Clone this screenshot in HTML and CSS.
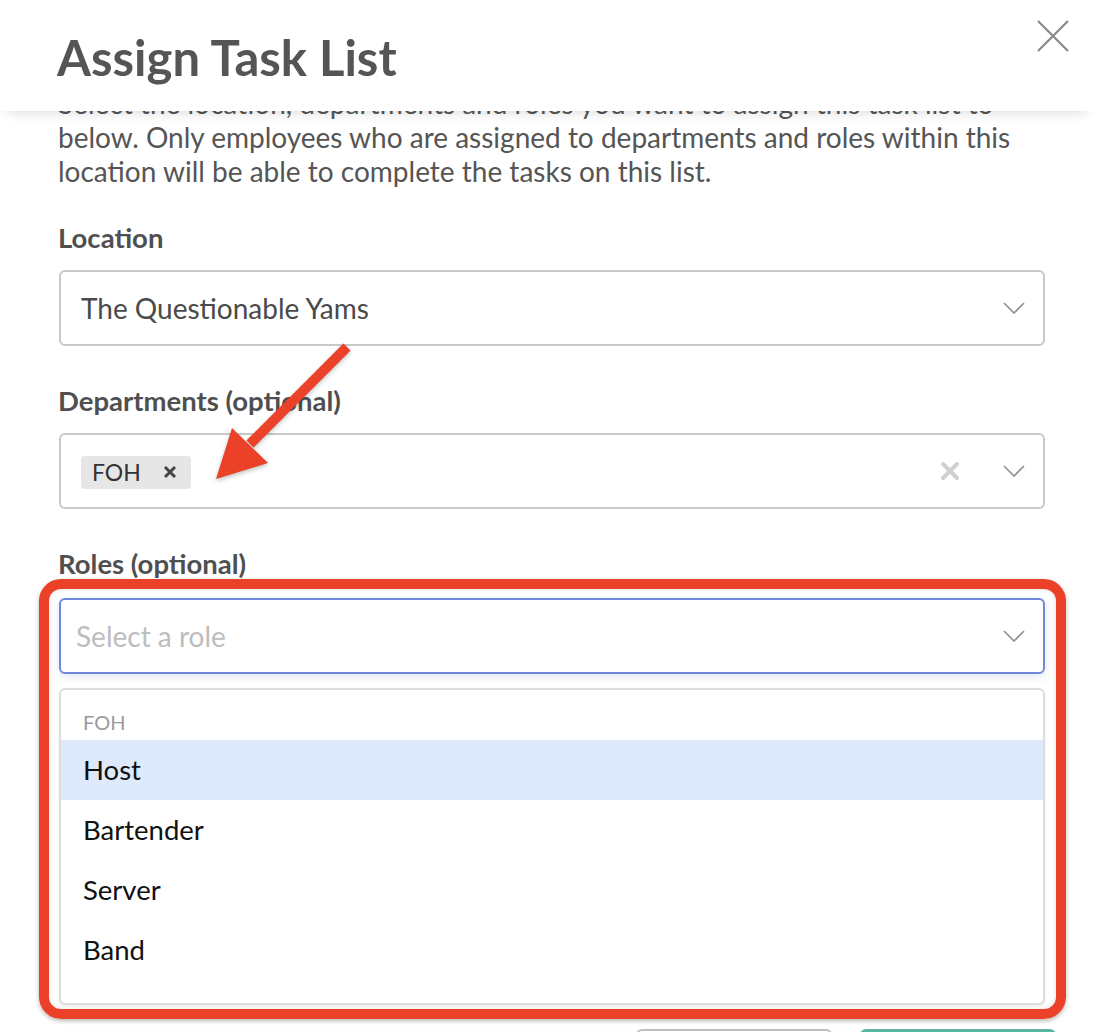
FILE: index.html
```html
<!DOCTYPE html>
<html lang="en">
<head>
<meta charset="UTF-8">
<meta name="viewport" content="width=device-width, initial-scale=1.0">
<title>Assign Task List</title>
<link rel="stylesheet" href="styles.css">
</head>
<body>
<div id="modal">
    <header class="modal-head">
        <h1>Assign Task List</h1>
        <a href="javascript:;" class="close" aria-label="Close">
            <svg width="32" height="32" viewBox="0 0 32 32"><path d="M1 1L31 31M31 1L1 31"/></svg>
        </a>
    </header>
    <div class="modal-body">
        <p class="intro">Select the location, departments and roles you want to assign this task list to below. Only employees who are assigned to departments and roles within this location will be able to complete the tasks on this list.</p>
        <div class="field">
            <label>Location</label>
            <div class="select">
                <span class="value">The Questionable Yams</span>
                <svg class="chevron" width="22" height="12" viewBox="0 0 22 12"><path d="M1 1l10 10 10-10"/></svg>
            </div>
        </div>
        <div class="field">
            <label>Departments (optional)</label>
            <div class="select">
                <span class="value">
                    <span class="chip">FOH<svg width="14" height="14" viewBox="0 0 14 14"><path d="M2 2l10 10M12 2L2 12"/></svg></span>
                </span>
                <svg class="clear" width="20" height="20" viewBox="0 0 20 20"><path d="M3 3l14 14M17 3L3 17"/></svg>
                <svg class="chevron" width="22" height="12" viewBox="0 0 22 12"><path d="M1 1l10 10 10-10"/></svg>
            </div>
        </div>
        <div class="field roles">
            <label>Roles (optional)</label>
            <div class="callout">
                <div class="select focus">
                    <span class="value placeholder">Select a role</span>
                    <svg class="chevron" width="22" height="12" viewBox="0 0 22 12"><path d="M1 1l10 10 10-10"/></svg>
                </div>
                <ul class="menu">
                    <li class="group">FOH</li>
                    <li class="active">Host</li>
                    <li>Bartender</li>
                    <li>Server</li>
                    <li>Band</li>
                </ul>
            </div>
        </div>
        <div class="actions">
            <a href="javascript:;" class="btn cancel" aria-label="Cancel"></a>
            <a href="javascript:;" class="btn save" aria-label="Save"></a>
        </div>
    </div>
    <svg class="arrow" width="150" height="155" viewBox="0 0 150 155">
        <path class="shaft" d="M142 12L45 109"/>
        <polygon points="11,144 27,93 63,128"/>
    </svg>
</div>
</body>
</html>
```

FILE: styles.css
```css
* {box-sizing: border-box;}
body {margin: 0;background: #fff;font-family: Lato, "Liberation Sans", sans-serif;color: #4a4a4a;}
ul {margin: 0;padding: 0;list-style: none;}
#modal {position: relative;width: 1093px;height: 1032px;overflow: hidden;}

.modal-head {position: relative;z-index: 2;height: 111px;padding: 27px 0 0 57px;background: #fff;box-shadow: 0 7px 12px -7px rgba(0, 0, 0, .18);}
.modal-head h1 {margin: 0;font-size: 49px;line-height: 60px;font-weight: 700;color: #555;}
.close {position: absolute;top: 20px;right: 24px;width: 32px;height: 32px;}
.close svg {display: block;}
.close path {stroke: #8a8a8a;stroke-width: 2.2;fill: none;}

.modal-body {padding: 0 48px 0 59px;}
.intro {max-width: 990px;margin: -25px 0 36px -1px;font-size: 28px;line-height: 34px;color: #555;}

.field + .field {margin-top: 41px;}
.field label {display: block;margin: 0 0 18px -1px;font-size: 27.5px;line-height: 28px;font-weight: 700;color: #4f4f4f;}
.roles label {margin-bottom: 1px;}

.select {display: flex;align-items: center;height: 76px;padding: 0 18px 0 20px;border: 2px solid #c9c9c9;border-radius: 6px;background: #fff;}
.select .value {flex: 1;font-size: 28px;color: #4a4a4a;}
.select .placeholder {margin-left: -5px;color: #bdbdbd;}
.chevron path {stroke: #8f8f8f;stroke-width: 1.6;fill: none;}
.clear {margin-right: 43px;}
.clear path {stroke: #cfcfcf;stroke-width: 4;stroke-linecap: round;fill: none;}
.select.focus {border-color: #6f88d9;box-shadow: 0 3px 8px rgba(100, 120, 210, .18);}

.chip {display: inline-flex;align-items: center;height: 33px;padding: 0 14px 0 11px;border-radius: 4px;background: #e6e6e6;font-size: 23px;color: #333;}
.chip svg {margin-left: 22px;}
.chip path {stroke: #444;stroke-width: 3;fill: none;}

.callout {margin: 1px -21px 0 -20px;padding: 9px 11px 4px 10px;border: 10px solid #ea4128;border-radius: 22px;box-shadow: 0 2px 4px rgba(0, 0, 0, .28), inset 0 0 5px rgba(0, 0, 0, .12);}
.menu {height: 317px;margin-top: 14px;padding: 20px 0 0;border: 2px solid #dedede;border-radius: 6px;background: #fff;box-shadow: 0 1px 3px rgba(0, 0, 0, .08);}
.menu li {height: 60px;padding-left: 22px;font-size: 27.5px;line-height: 60px;color: #111;}
.menu .group {height: 30px;font-size: 20px;line-height: 24px;color: #9a9a9a;}
.menu .active {background: #deeafb;}

.actions {display: flex;justify-content: flex-end;gap: 28px;margin: 10px -11px 0 0;}
.btn {display: block;width: 196px;height: 50px;border-radius: 6px;text-decoration: none;}
.cancel {border: 2px solid #bdbdbd;}
.save {border: 2px solid #5bb7a2;background: #5bb7a2;}

.arrow {position: absolute;left: 205px;top: 335px;z-index: 3;filter: drop-shadow(0 2px 2px rgba(0, 0, 0, .25));}
.arrow .shaft {stroke: #ea4128;stroke-width: 10;fill: none;}
.arrow polygon {fill: #ea4128;}
```
